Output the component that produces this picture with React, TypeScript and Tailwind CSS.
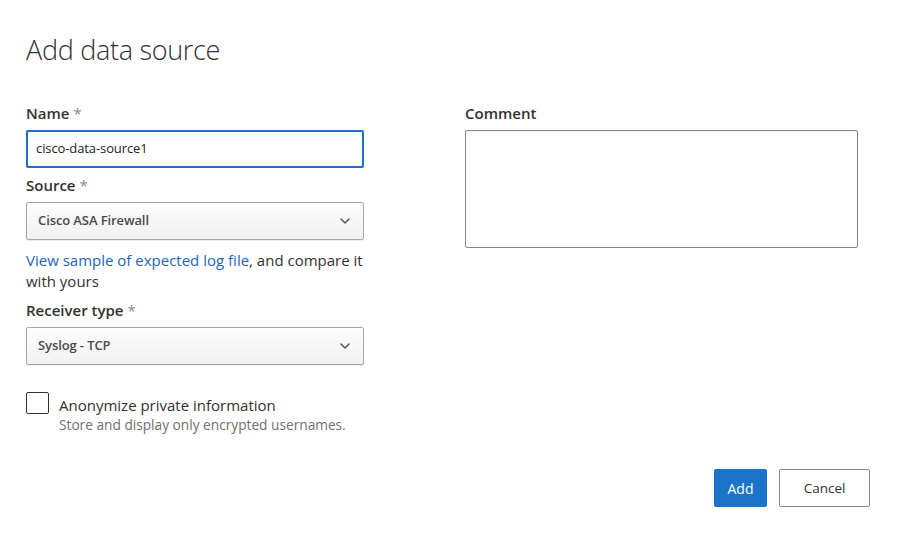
import { ChevronDown } from 'lucide-react';

const font = { fontFamily: '"Segoe UI", "Open Sans", sans-serif' };

function Label({ text, required }: { text: string; required?: boolean }) {
  return (
    <div className="h-[29px] pb-[4px] flex items-center text-[15px] font-semibold text-[#323130]">
      {text}
      {required && <span className="ml-1 font-normal text-[#8a8886]">*</span>}
    </div>
  );
}

function Select({ value }: { value: string }) {
  return (
    <div className="h-[38px] w-full flex items-center justify-between pl-[11px] pr-[10px] rounded-[2px] border border-[#a6a6a6] bg-gradient-to-b from-[#fdfdfd] to-[#f1f1f1] shadow-[0_1px_1px_rgba(0,0,0,0.08)]">
      <span className="text-[13px] font-semibold text-[#4a4a4a] tracking-[-0.1px]">{value}</span>
      <ChevronDown className="h-4 w-4 text-[#555]" strokeWidth={2.2} />
    </div>
  );
}

export default function App() {
  return (
    <div className="w-[897px] h-[534px] bg-white flex flex-col pl-[26px] pr-[27px]" style={font}>
      <h1 className="mt-[30px] h-[40px] flex items-center text-[27px] font-light text-[#323130] tracking-[-0.3px]">
        Add data source
      </h1>

      <div className="mt-[31px] flex gap-[101px]">
        {/* Left column */}
        <div className="w-[338px] flex flex-col">
          <Label text="Name" required />
          <div className="h-[38px] flex items-center px-[8px] border-2 border-[#1f6fc5] rounded-[2px] text-[13px] tracking-[-0.1px] text-[#201f1e]">
            cisco-data-source1
          </div>

          <div className="mt-[5px]">
            <Label text="Source" required />
          </div>
          <Select value="Cisco ASA Firewall" />

          <p className="mt-[10px] text-[15px] leading-[21px] text-[#323130]">
            <a className="text-[#1a66c2]">View sample of expected log file</a>, and compare it with yours
          </p>

          <div className="mt-[6px]">
            <Label text="Receiver type" required />
          </div>
          <Select value="Syslog - TCP" />

          <div className="mt-[27px] flex gap-[10px]">
            <div className="w-[23px] h-[22px] rounded-[2px] border border-[#323130] shrink-0" />
            <div className="flex flex-col pt-[2px]">
              <span className="text-[15px] leading-[22px] text-[#323130]">Anonymize private information</span>
              <span className="text-[13.7px] leading-[17px] text-[#707070]">Store and display only encrypted usernames.</span>
            </div>
          </div>
        </div>

        {/* Right column */}
        <div className="w-[393px] flex flex-col">
          <Label text="Comment" />
          <div className="h-[118px] rounded-[2px] border border-[#8a8886] shadow-[inset_0_1px_2px_rgba(0,0,0,0.08)]" />
        </div>
      </div>

      <div className="mt-auto mb-[27px] flex justify-end gap-[12px]">
        <button className="h-[38px] w-[53px] rounded-[2px] bg-[#1b74c8] text-white text-[14px]">Add</button>
        <button className="h-[38px] w-[91px] rounded-[2px] border border-[#8a8886] bg-white text-[#323130] text-[13.5px]">
          Cancel
        </button>
      </div>
    </div>
  );
}
